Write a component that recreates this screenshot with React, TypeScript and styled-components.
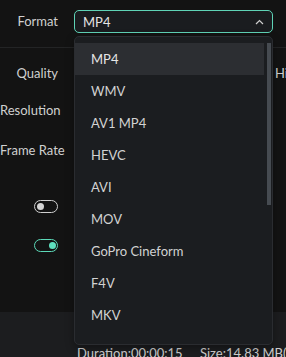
import React from 'react';
import styled, { createGlobalStyle } from 'styled-components';

const Global = createGlobalStyle`
  html, body { margin: 0; padding: 0; background: #131313; }
  body { font-family: Lato, "Noto Sans", sans-serif; }
`;

const Screen = styled.div`
  position: relative;
  width: 286px;
  height: 357px;
  overflow: hidden;
  background: #131313;
  color: #d2d2d2;
  font-size: 13px;
  display: flex;
  flex-direction: column;
`;

const HeaderRow = styled.div`
  height: 48px;
  flex-shrink: 0;
  display: flex;
  align-items: flex-start;
  padding-top: 10px;
  box-sizing: border-box;
  gap: 16px;
  border-bottom: 1px solid #232425;
`;

const Label = styled.div`
  width: 58px;
  flex-shrink: 0;
  text-align: right;
  white-space: nowrap;
  line-height: 23px;
  color: #d0d0d0;
`;

const SelectBox = styled.div`
  width: 199px;
  height: 23px;
  box-sizing: border-box;
  border: 1px solid #5fd3b6;
  border-radius: 5px;
  background: #1a1c1f;
  padding: 0 8px;
  display: flex;
  align-items: center;
  justify-content: space-between;
  color: #e4e4e4;
`;

const FieldRow = styled.div<{ $h: number }>`
  height: ${(p) => p.$h}px;
  flex-shrink: 0;
  display: flex;
  align-items: center;
  gap: 16px;
`;

const Value = styled.div`
  padding-left: 201px;
  white-space: nowrap;
  color: #d0d0d0;
`;

const ToggleSlot = styled.div`
  width: 58px;
  display: flex;
  justify-content: flex-end;
`;

const Toggle = styled.div<{ $on: boolean }>`
  width: 24px;
  height: 13px;
  box-sizing: border-box;
  border-radius: 7px;
  border: 1.5px solid ${(p) => (p.$on ? '#5cd9b8' : '#cfcfcf')};
  display: flex;
  align-items: center;
  justify-content: ${(p) => (p.$on ? 'flex-end' : 'flex-start')};
  padding: 0 1.5px;
`;

const Knob = styled.div<{ $on: boolean }>`
  width: 7px;
  height: 7px;
  border-radius: 50%;
  background: ${(p) => (p.$on ? '#5ee0bf' : '#d4d4d4')};
`;

const Footer = styled.div`
  margin-top: auto;
  height: 45px;
  flex-shrink: 0;
  background: #1c1d1f;
  display: flex;
  align-items: flex-end;
  padding-left: 77px;
  box-sizing: border-box;
  white-space: nowrap;
  color: #d0d0d0;
`;

const FooterItem = styled.div<{ $w?: number }>`
  width: ${(p) => (p.$w ? `${p.$w}px` : 'auto')};
  flex-shrink: 0;
  line-height: 16px;
  margin-bottom: -4px;
`;

const Menu = styled.div`
  position: absolute;
  left: 74px;
  top: 36px;
  width: 199px;
  height: 309px;
  box-sizing: border-box;
  background: #1b1d20;
  border: 1px solid #2a2c30;
  border-radius: 5px;
  padding: 6px 8px 0 0;
  box-shadow: 0 3px 8px rgba(0, 0, 0, 0.35);
`;

const Item = styled.div<{ $active?: boolean }>`
  height: 32px;
  display: flex;
  align-items: center;
  padding-left: 16px;
  background: ${(p) => (p.$active ? '#2c2e32' : 'transparent')};
  color: ${(p) => (p.$active ? '#e6e6e6' : '#d2d2d2')};
  white-space: nowrap;
`;

const ScrollThumb = styled.div`
  position: absolute;
  right: 1px;
  top: 6px;
  width: 4px;
  height: 162px;
  background: #464b51;
`;

const formats = ['MP4', 'WMV', 'AV1 MP4', 'HEVC', 'AVI', 'MOV', 'GoPro Cineform', 'F4V', 'MKV'];

export default function App() {
  return (
    <>
      <Global />
      <Screen>
        <HeaderRow>
          <Label>Format</Label>
          <SelectBox>
            <span>MP4</span>
            <svg width="9" height="6" viewBox="0 0 9 6" fill="none">
              <path d="M1 5 L4.5 1.5 L8 5" stroke="#cfcfcf" strokeWidth="1.2" />
            </svg>
          </SelectBox>
        </HeaderRow>
        <FieldRow $h={50}>
          <Label>Quality</Label>
          <Value>High</Value>
        </FieldRow>
        <FieldRow $h={24}>
          <Label>Resolution</Label>
        </FieldRow>
        <FieldRow $h={56}>
          <Label>Frame Rate</Label>
        </FieldRow>
        <FieldRow $h={57}>
          <ToggleSlot>
            <Toggle $on={false}>
              <Knob $on={false} />
            </Toggle>
          </ToggleSlot>
        </FieldRow>
        <FieldRow $h={21}>
          <ToggleSlot>
            <Toggle $on>
              <Knob $on />
            </Toggle>
          </ToggleSlot>
        </FieldRow>
        <Footer>
          <FooterItem $w={123}>Duration:00:00:15</FooterItem>
          <FooterItem>Size:14.83 MB(estimated)</FooterItem>
        </Footer>
        <Menu>
          {formats.map((f, i) => (
            <Item key={f} $active={i === 0}>
              {f}
            </Item>
          ))}
          <ScrollThumb />
        </Menu>
      </Screen>
    </>
  );
}
